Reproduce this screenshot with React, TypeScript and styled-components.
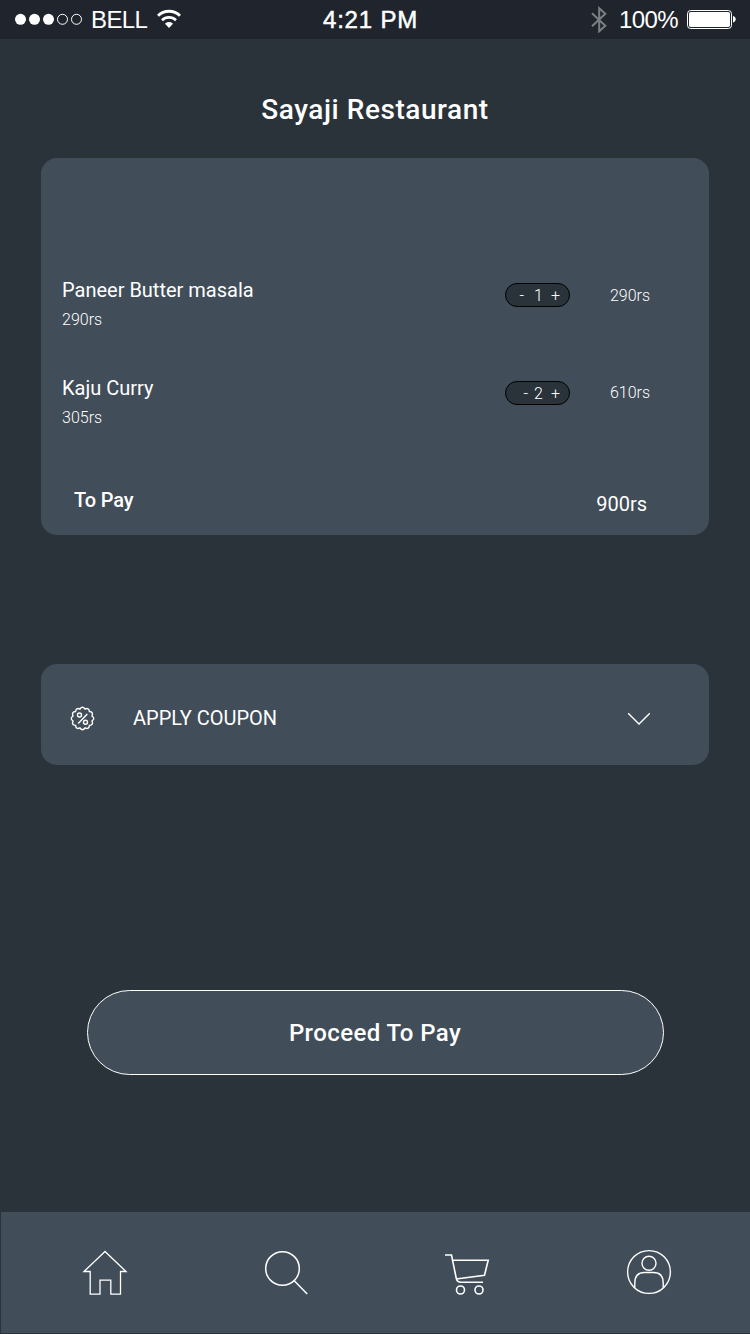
import React from "react";
import styled, { createGlobalStyle } from "styled-components";

const GlobalStyle = createGlobalStyle`
  * { box-sizing: border-box; }
  body { margin: 0; background: #2b333a; }
  svg { display: block; flex: none; }
`;

const Screen = styled.main`
  width: 750px;
  height: 1334px;
  display: flex;
  flex-direction: column;
  background: #2b333a;
  color: #fff;
  font-family: Roboto, sans-serif;
  white-space: nowrap;
  overflow: hidden;
`;

const StatusBar = styled.header`
  height: 39px;
  flex: none;
  display: grid;
  grid-template-columns: 1fr auto 1fr;
  align-items: center;
  padding: 0 14px 1px 15px;
  background: #20252d;
  font: 24px/36px "Liberation Sans", Arial, sans-serif;
`;

const StatusGroup = styled.div<{ $end?: boolean }>`
  display: flex;
  align-items: center;
  justify-content: ${(p) => (p.$end ? "flex-end" : "flex-start")};
`;

const Carrier = styled.span`
  margin: 1px 10px 0 8px;
  font-size: 24px;
  letter-spacing: -0.6px;
`;

const Clock = styled.span`
  margin-top: 1px;
  margin-right: 10px;
  font-size: 24px;
  letter-spacing: 0.8px;
  -webkit-text-stroke: 0.5px #fff;
`;

const BatteryLevel = styled.span`
  margin: 1px 9px 0 12px;
  letter-spacing: -0.6px;
`;

const Title = styled.h1`
  margin: 51px 0 0;
  height: 38px;
  flex: none;
  text-align: center;
  font-size: 28px;
  line-height: 39px;
  font-weight: 500;
  letter-spacing: 0.56px;
`;

const Card = styled.section`
  width: 668px;
  flex: none;
  margin: 0 auto;
  border-radius: 16px;
  background: #414d58;
`;

const OrderCard = styled(Card)`
  height: 377px;
  margin-top: 30px;
  padding: 117px 59px 0 21px;
`;

const Item = styled.article`
  height: 98px;
  display: flex;
`;

const ItemInfo = styled.div`
  flex: 1;
`;

const ItemName = styled.h2`
  margin: 0;
  font-size: 20px;
  line-height: 30px;
  font-weight: 400;
`;

const UnitPrice = styled.p`
  margin: 3px 0 0;
  font-size: 16px;
  line-height: 24px;
  font-weight: 300;
`;

const Stepper = styled.div`
  width: 65px;
  height: 24px;
  margin-top: 8px;
  display: flex;
  align-items: center;
  justify-content: flex-end;
  padding: 2px 9px 0 0;
  border: 1px solid #000;
  border-radius: 12px;
  background: #2b333a;
  font-size: 16px;
  line-height: 22px;
  font-weight: 300;
`;

const Minus = styled.span<{ $gap: number }>`
  margin-right: ${(p) => p.$gap}px;
`;

const Count = styled.span`
  margin-right: 8px;
`;

const LineTotal = styled.span<{ $top: number }>`
  width: 80px;
  margin-top: ${(p) => p.$top}px;
  text-align: right;
  font-size: 16px;
  line-height: 24px;
  font-weight: 300;
`;

const Total = styled.div`
  display: flex;
  justify-content: space-between;
  padding: 14px 3px 0 12px;
  font-size: 20px;
  line-height: 30px;
`;

const TotalLabel = styled.span`
  font-weight: 500;
  letter-spacing: -0.15px;
`;

const TotalValue = styled.span`
  margin-top: 4px;
`;

const CouponCard = styled(Card)`
  height: 101px;
  margin-top: 129px;
  display: flex;
  align-items: center;
  padding: 7px 59px 0 29px;
`;

const CouponLabel = styled.span`
  flex: 1;
  margin-left: 38px;
  font-size: 20px;
  line-height: 30px;
`;

const PayButton = styled.button`
  width: 577px;
  height: 85px;
  flex: none;
  margin: 225px 0 0 87px;
  border: 1px solid #fff;
  border-radius: 43px;
  background: #414d58;
  color: #fff;
  font: 500 24px/36px Roboto, sans-serif;
  letter-spacing: 0.4px;
  padding: 0 1px 0 0;
`;

const TabBar = styled.nav`
  height: 121px;
  margin: auto 0 1px 1px;
  flex: none;
  display: flex;
  justify-content: space-between;
  align-items: center;
  padding: 0 78px 2px 81px;
  background: #414d58;
`;

function SignalIcon() {
  return (
    <svg width="68" height="12" viewBox="0 0 68 12">
      {[5.5, 19.5, 33.5].map((x) => (
        <circle key={x} cx={x} cy="6.3" r="5.5" fill="#fff" />
      ))}
      {[47.5, 61.5].map((x) => (
        <circle key={x} cx={x} cy="6.3" r="5" fill="none" stroke="#fff" />
      ))}
    </svg>
  );
}

function WifiIcon() {
  return (
    <svg width="24" height="20" viewBox="0 0 24 20" fill="none" stroke="#fff" strokeWidth="3">
      <path d="M1 6.8C7 .8 17 .8 23 6.8" />
      <path d="M5 11.2C9 7.4 15 7.4 19 11.2" strokeWidth="2.6" />
      <path d="M8 14.8C10 12.4 14 12.4 16 14.8L12 19Z" fill="#fff" stroke="none" />
    </svg>
  );
}

function BluetoothIcon() {
  return (
    <svg width="16" height="28" viewBox="0 0 16 28" fill="none" stroke="#7c7f84" strokeWidth="2">
      <path d="M1 8.3L14.3 20.8L8.2 26.3V3.3L14.3 8.8L1 21.3" />
    </svg>
  );
}

function BatteryIcon() {
  return (
    <svg width="49" height="20" viewBox="0 0 49 20">
      <rect x=".5" y="1.5" width="44" height="18" rx="3.2" fill="none" stroke="#fff" />
      <rect x="2" y="3" width="41" height="15" rx="1.8" fill="#fff" />
      <path d="M46 7C49.6 7.5 49.6 12.8 46 13.5Z" fill="#fff" />
    </svg>
  );
}

const badgePoints = Array.from({ length: 12 }, (_, i) => {
  const at = (r: number, deg: number) => {
    const a = (deg * Math.PI) / 180;
    return `${(12.5 + r * Math.sin(a)).toFixed(2)} ${(12.5 - r * Math.cos(a)).toFixed(2)}`;
  };
  return `${i ? "" : `M${at(9.8, -15)}`}Q${at(13, i * 30)} ${at(9.8, i * 30 + 15)}`;
}).join("");

function CouponIcon() {
  return (
    <svg width="25" height="25" viewBox="0 0 25 25" fill="none" stroke="#fff" strokeWidth="1.4">
      <path d={`${badgePoints}Z`} />
      <path d="M8.2 17.5L17.3 8" />
      <circle cx="9.5" cy="9" r="2" />
      <circle cx="15.5" cy="16.2" r="2" />
    </svg>
  );
}

function ChevronIcon() {
  return (
    <svg width="23" height="13" viewBox="0 0 23 13" fill="none" stroke="#fff" strokeWidth="1.4">
      <path d="M1.2 1.2L12 12L22.8 1.2" />
    </svg>
  );
}

function HomeIcon() {
  return (
    <svg width="46" height="46" viewBox="0 0 46 46" fill="none" stroke="#fff" strokeWidth="1.3">
      <path d="M23 2.5L2 22.5H8.2V45.2H18V31.2H28.8V45.2H38.5V22.5H44Z" />
    </svg>
  );
}

function SearchIcon() {
  return (
    <svg width="46" height="46" viewBox="0 0 46 46" fill="none" stroke="#fff" strokeWidth="1.5">
      <circle cx="19.5" cy="19.5" r="16.8" />
      <path d="M31 31.5L44.2 45" />
    </svg>
  );
}

function CartIcon() {
  return (
    <svg width="46" height="46" viewBox="0 0 46 46" fill="none" stroke="#fff" strokeWidth="1.6">
      <path d="M0 6H6.5L11.3 29.5Q12.3 33.3 16 33.3H38M7.5 11.3H43.2L39.5 26.2L11.2 30" />
      <circle cx="15.5" cy="41" r="4" />
      <circle cx="34" cy="41" r="4" />
    </svg>
  );
}

function ProfileIcon() {
  return (
    <svg width="46" height="46" viewBox="0 0 46 46" fill="none" stroke="#fff" strokeWidth="1.4">
      <circle cx="23" cy="23" r="21.4" />
      <circle cx="23" cy="14.3" r="7" />
      <path d="M8.8 38.8V34Q8.8 23.5 18.5 23.5H27.5Q37.2 23.5 37.2 34V38.8" />
    </svg>
  );
}

const items = [
  { name: "Paneer Butter masala", price: "290rs", count: 1, total: "290rs", minusGap: 10, top: 9 },
  { name: "Kaju Curry", price: "305rs", count: 2, total: "610rs", minusGap: 6, top: 8 },
];

export default function App() {
  return (
    <Screen>
      <GlobalStyle />
      <StatusBar>
        <StatusGroup>
          <SignalIcon />
          <Carrier>BELL</Carrier>
          <WifiIcon />
        </StatusGroup>
        <Clock>4:21 PM</Clock>
        <StatusGroup $end>
          <BluetoothIcon />
          <BatteryLevel>100%</BatteryLevel>
          <BatteryIcon />
        </StatusGroup>
      </StatusBar>
      <Title>Sayaji Restaurant</Title>
      <OrderCard>
        {items.map((item) => (
          <Item key={item.name}>
            <ItemInfo>
              <ItemName>{item.name}</ItemName>
              <UnitPrice>{item.price}</UnitPrice>
            </ItemInfo>
            <Stepper>
              <Minus $gap={item.minusGap}>-</Minus>
              <Count>{item.count}</Count>
              <span>+</span>
            </Stepper>
            <LineTotal $top={item.top}>{item.total}</LineTotal>
          </Item>
        ))}
        <Total>
          <TotalLabel>To Pay</TotalLabel>
          <TotalValue>900rs</TotalValue>
        </Total>
      </OrderCard>
      <CouponCard>
        <CouponIcon />
        <CouponLabel>APPLY COUPON</CouponLabel>
        <ChevronIcon />
      </CouponCard>
      <PayButton>Proceed To Pay</PayButton>
      <TabBar>
        <HomeIcon />
        <SearchIcon />
        <CartIcon />
        <ProfileIcon />
      </TabBar>
    </Screen>
  );
}
